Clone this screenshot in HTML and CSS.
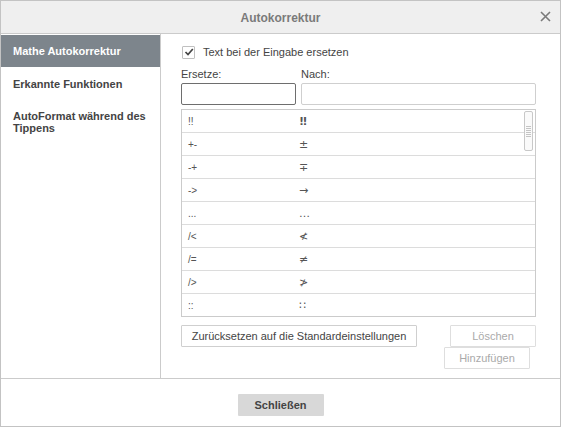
FILE: index.html
```html
<!DOCTYPE html>
<html lang="de">
<head>
<meta charset="utf-8">
<title>Autokorrektur</title>
<link rel="stylesheet" href="styles.css">
</head>
<body>
<div class="dialog">
  <div class="header">
    <span class="title">Autokorrektur</span>
    <svg class="close" width="11" height="11" viewBox="0 0 11 11"><path d="M1 1 L10 10 M10 1 L1 10" stroke="#7a7a7a" stroke-width="1.6" fill="none"/></svg>
  </div>
  <div class="main">
    <div class="sidebar">
      <div class="item active">Mathe Autokorrektur</div>
      <div class="item">Erkannte Funktionen</div>
      <div class="item two">AutoFormat während des Tippens</div>
    </div>
    <div class="content">
      <label class="check-row">
        <span class="checkbox"><svg width="10" height="10" viewBox="0 0 10 10"><path d="M1.5 5 L4 7.5 L8.8 2" stroke="#444" stroke-width="1.7" fill="none"/></svg></span>
        <span>Text bei der Eingabe ersetzen</span>
      </label>
      <div class="fields">
        <div class="field f1"><div class="lbl">Ersetze:</div><div class="input focus"></div></div>
        <div class="field f2"><div class="lbl">Nach:</div><div class="input"></div></div>
      </div>
      <div class="table">
        <div class="row"><span class="c1">!!</span><span class="c2 dbl">!!</span></div>
        <div class="row"><span class="c1">+-</span><span class="c2">±</span></div>
        <div class="row"><span class="c1">-+</span><span class="c2">∓</span></div>
        <div class="row"><span class="c1">-&gt;</span><span class="c2">→</span></div>
        <div class="row"><span class="c1">...</span><span class="c2">…</span></div>
        <div class="row"><span class="c1">/&lt;</span><span class="c2">≮</span></div>
        <div class="row"><span class="c1">/=</span><span class="c2">≠</span></div>
        <div class="row"><span class="c1">/&gt;</span><span class="c2">≯</span></div>
        <div class="row last"><span class="c1">::</span><span class="c2">∷</span></div>
        <div class="thumb"><span></span><span></span><span></span><span></span><span></span><span></span></div>
      </div>
      <div class="actions">
        <button class="btn reset">Zurücksetzen auf die Standardeinstellungen</button>
        <div class="side-btns">
          <button class="btn disabled del">Löschen</button>
          <button class="btn disabled add">Hinzufügen</button>
        </div>
      </div>
    </div>
  </div>
  <div class="footer">
    <button class="close-btn">Schließen</button>
  </div>
</div>
</body>
</html>
```
FILE: styles.css
```css
* { box-sizing: border-box; }
html, body { margin: 0; padding: 0; background: #fff; }
body {
  font-family: "Liberation Sans", Arial, sans-serif;
  font-size: 11px;
  color: #444;
}
.dialog {
  width: 561px;
  height: 427px;
  border: 1px solid #c3c3c3;
  display: flex;
  flex-direction: column;
}
.header {
  height: 33px;
  background: #efefef;
  border-bottom: 1px solid #cbcbcb;
  display: flex;
  align-items: center;
  justify-content: center;
  position: relative;
  flex: none;
}
.title {
  font-size: 12px;
  font-weight: bold;
  color: #7a7a7a;
  padding-top: 1px;
}
.close {
  position: absolute;
  right: 9px;
  top: 10px;
}
.main {
  display: flex;
  height: 345px;
  flex: none;
  border-bottom: 1px solid #cbcbcb;
}
.sidebar {
  width: 160px;
  border-right: 1px solid #cbcbcb;
  padding-top: 1px;
  flex: none;
}
.item {
  height: 33px;
  padding: 0 12px;
  display: flex;
  align-items: center;
  font-weight: bold;
  color: #444;
  line-height: 12px;
}
.item.active {
  height: 32px;
  background: #7d858c;
  color: #fff;
}
.item.two {
  height: 42px;
  padding-top: 1px;
}
.content {
  padding: 11px 24px 0 20px;
  flex: 1;
}
.check-row {
  display: flex;
  align-items: center;
  height: 14px;
  gap: 8px;
  margin-left: 1px;
}
.checkbox {
  width: 13px;
  height: 13px;
  border: 1px solid #c0c0c0;
  border-radius: 1px;
  display: flex;
  align-items: center;
  justify-content: center;
}
.fields {
  display: flex;
  gap: 5px;
  margin-top: 9px;
}
.field.f1 { width: 115px; }
.field.f2 { width: 235px; }
.lbl {
  height: 13px;
  line-height: 13px;
  margin-bottom: 2px;
}
.input {
  height: 22px;
  border: 1px solid #cfcfcf;
  border-radius: 2px;
}
.input.focus { border-color: #6e6e6e; }
.table {
  margin-top: 4px;
  width: 355px;
  height: 208px;
  border: 1px solid #cbcbcb;
  position: relative;
}
.row {
  height: 23px;
  border-bottom: 1px solid #dcdcdc;
  display: flex;
  align-items: center;
  font-size: 10px;
  color: #555;
}
.row.last { border-bottom: none; }
.c1 { width: 117px; padding-left: 6px; flex: none; }
.c2 { font-family: "DejaVu Sans", sans-serif; font-size: 11px; color: #555; }
.c2.dbl { letter-spacing: -1.5px; font-weight: bold; }
.thumb {
  position: absolute;
  right: 2px;
  top: 1px;
  width: 9px;
  height: 40px;
  background: #fafafa;
  border: 1px solid #c8c8c8;
  border-radius: 2px;
  display: flex;
  flex-direction: column;
  align-items: center;
  justify-content: center;
  gap: 1px;
}
.thumb span {
  display: block;
  width: 5px;
  height: 1px;
  background: #c4c4c4;
}
.actions {
  display: flex;
  justify-content: space-between;
  margin-top: 8px;
}
.btn {
  font-family: "Liberation Sans", Arial, sans-serif;
  font-size: 11px;
  height: 22px;
  padding: 0 10px;
  background: #fff;
  border: 1px solid #cfcfcf;
  border-radius: 1px;
  color: #444;
  white-space: nowrap;
}
.reset { width: 236px; padding: 0; }
.side-btns {
  display: flex;
  flex-direction: column;
  align-items: flex-end;
}
.disabled { color: #aaa; border-color: #dedede; }
.del { width: 86px; }
.add { width: 86px; margin-right: 6px; }
.footer {
  flex: 1;
  display: flex;
  justify-content: center;
  padding-top: 15px;
}
.close-btn {
  width: 86px;
  height: 22px;
  background: #d8d8d8;
  border: none;
  border-radius: 1px;
  font-family: "Liberation Sans", Arial, sans-serif;
  font-size: 11px;
  font-weight: bold;
  color: #444;
}
```
